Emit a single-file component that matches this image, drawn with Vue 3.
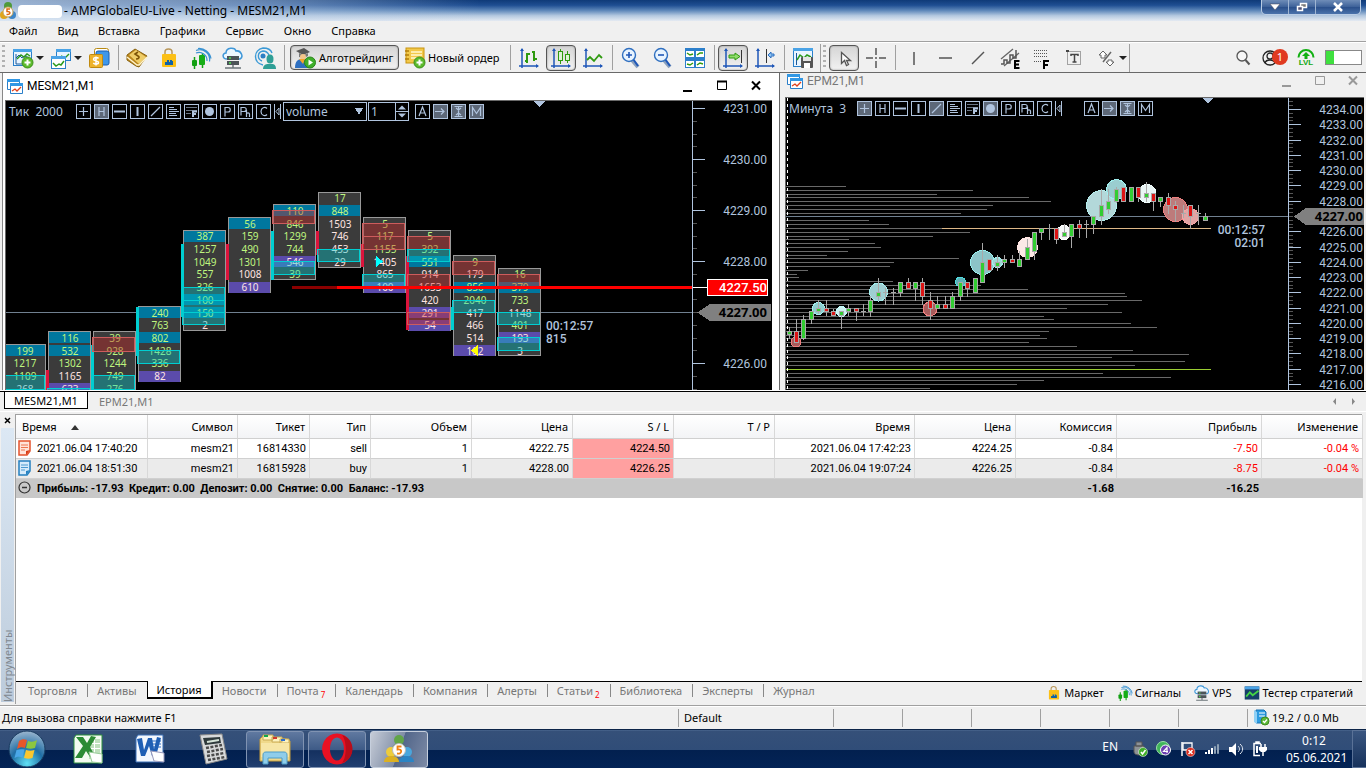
<script setup>
import { ref } from 'vue';

const menuItems = ['Файл', 'Вид', 'Вставка', 'Графики', 'Сервис', 'Окно', 'Справка'];

// 22x22 toolbar drawings
const icons = {
    newChart: '<rect x="1.5" y="2.5" width="18" height="16" fill="#eaf5ff" stroke="#2a7fc9"/><rect x="1" y="2" width="19" height="3" fill="#4aa3e6"/><path d="M4 7v10h14M4 11l3-3 3 3 3-2 4 2" fill="none" stroke="#1c5a9c" stroke-width="1"/><path d="M5 12l4-4 3 2 3-3 3 2" fill="none" stroke="#2a9a1c" stroke-width="1.4"/><circle cx="15.5" cy="15.5" r="5.5" fill="#5cba2c" stroke="#3b8f1b"/><path d="M15.5 12.5v6M12.5 15.5h6" stroke="#fff" stroke-width="2"/>',
    profiles: '<rect x="6.5" y="2.5" width="14" height="11" fill="#eaf5ff" stroke="#2a7fc9"/><rect x="6" y="2" width="15" height="3" fill="#4aa3e6"/><path d="M11 9l4 2 4-4" fill="none" stroke="#2a9a1c" stroke-width="1.4"/><rect x="1.5" y="9.5" width="14" height="12" fill="#fff" stroke="#2a7fc9"/><rect x="1" y="9" width="15" height="3" fill="#4aa3e6"/><path d="M3 16l3 3 3-2 2 1 3-4" fill="none" stroke="#2a9a1c" stroke-width="1.5"/>',
    market: '<rect x="6.5" y="1.5" width="14" height="15" rx="2" fill="#fff" stroke="#b98a12"/><rect x="8" y="4" width="13" height="14" rx="2" fill="#3f97e8" stroke="#1c5fb0"/><rect x="1.5" y="7.5" width="13" height="13" rx="1" fill="#eeb32b" stroke="#c08a10"/><path d="M10.5 11.5c-1-1.500-5-1.200-5 .7 0 2.300 5 1 5 3.400 0 2-4 2-5.200.4M8 9.500v9" stroke="#fff" stroke-width="1.5" fill="none"/>',
    book: '<path d="M1 8l8-6 12 7-8 11-3-1L1 13z" fill="#b9851c" stroke="#8a6310"/><path d="M3 8l7-5 10 7-7 7z" fill="#efcd68"/><path d="M1 10l10 8 2 0 8-8" fill="none" stroke="#fff3c9" stroke-width="1.5"/><path d="M12 5l-3 2 3 2c2 1 1 3-2 3" fill="none" stroke="#7c5306" stroke-width="1.6"/>',
    bag: '<path d="M7 8V5c0-4 7-4 7 0v3" fill="none" stroke="#b9975a" stroke-width="1.5"/><rect x="4" y="7" width="14" height="13" rx="1" fill="#fcc016"/><path d="M7 18v-3h2v-2h2v2h1v-2h2v1h1v4z" fill="#0e62a8"/>',
    signals: '<path d="M4.5 10v12M12.500 6v15" stroke="#12a012" stroke-width="1.5"/><rect x="2" y="13" width="5" height="6" rx="1" fill="#12a012"/><rect x="9" y="8" width="6" height="10" rx="1" fill="#16ad16"/><path d="M6 6a8 8 0 0 1 11 8M6 3.500a10 10 0 0 1 13.500 11M8 1.500a12 12 0 0 1 13 10" fill="none" stroke="#3b93d2" stroke-width="1.2"/>',
    cloud: '<path d="M5 12c-5 0-5-6-1-6 0-6 9-6 10-2 5-1 8 6 4 8z" fill="#eef8ff" stroke="#3f97d8" stroke-width="1.5"/><rect x="5" y="9" width="12" height="4" fill="#4c5458"/><rect x="5" y="14" width="12" height="4" fill="#4c5458"/><path d="M7 11h2M7 16h2" stroke="#4fe04f" stroke-width="1.5"/><path d="M11 18v3M3 21h16" stroke="#6b7478" stroke-width="1.5"/>',
    community: '<path d="M9 18C-1 16-1 3 9 1c5 0 8 2 9 5M8 14C3 12 3 5 9 4c3 0 5 2 6 4" fill="none" stroke="#3b9ad6" stroke-width="1.4"/><circle cx="9" cy="9" r="2.5" fill="#2d7fc4"/><ellipse cx="16" cy="12" rx="3.5" ry="4.5" fill="#2f9f96"/><path d="M9 22c0-4 3-5 5-5h4c2 0 4 1 4 5z" fill="#2f9f96"/>',
    bars: '<path d="M4 2v19M1 19h19" stroke="#1f57b8" stroke-width="1.5"/><path d="M4 1l-2 3h4zM21 19l-3-2v4z" fill="#1f57b8"/><path d="M9 6v10M7 14h2M9 7h3M16 4v10M14 5h2M16 12h3" stroke="#2f9a10" stroke-width="2"/>',
    candles: '<path d="M4 2v19M1 19h19" stroke="#1f57b8" stroke-width="1.5"/><path d="M4 1l-2 3h4zM21 19l-3-2v4z" fill="#1f57b8"/><path d="M10.5 2v15M17.500 4v12" stroke="#2f9a10"/><rect x="8.5" y="4.5" width="4" height="9" fill="#dff2d8" stroke="#2f9a10"/><rect x="15.5" y="7.5" width="4" height="6" fill="#dff2d8" stroke="#2f9a10"/>',
    line: '<path d="M4 2v19M1 19h19" stroke="#1f57b8" stroke-width="1.5"/><path d="M4 1l-2 3h4zM21 19l-3-2v4z" fill="#1f57b8"/><path d="M5 13l3-3 4 4 5-6 3 3" fill="none" stroke="#2f9a10" stroke-width="1.8"/>',
    zoomIn: '<path d="M12 13l6 7" stroke="#8aa0bd" stroke-width="4"/><path d="M13 12l5 7" stroke="#1f57b8" stroke-width="2"/><circle cx="9" cy="8" r="6.5" fill="#e8f4ff" stroke="#2f6fc0" stroke-width="1.4"/><path d="M9 5v6M6 8h6" stroke="#1f57b8" stroke-width="1.6"/>',
    zoomOut: '<path d="M12 13l6 7" stroke="#8aa0bd" stroke-width="4"/><path d="M13 12l5 7" stroke="#1f57b8" stroke-width="2"/><circle cx="9" cy="8" r="6.5" fill="#e8f4ff" stroke="#2f6fc0" stroke-width="1.4"/><path d="M6 8h6" stroke="#1f57b8" stroke-width="1.6"/>',
    tile: '<rect x="1" y="1" width="20" height="20" fill="#2c7fcb"/><path d="M2 4h8v6H2zM12 4h8v6h-8zM2 14h8v6H2zM12 14h8v6h-8z" fill="#fff"/><path d="M3 6l3 2 3-1M13 8l3-2 3 0M3 17l3 1 3-2M13 18l3-2 3 1" fill="none" stroke="#2f9a10" stroke-width="1.5"/>',
    scroll: '<path d="M4 2v19M1 19h19" stroke="#1f57b8" stroke-width="1.5"/><path d="M4 1l-2 3h4zM21 19l-3-2v4z" fill="#1f57b8"/><path d="M19.5 3v13" stroke="#333"/><path d="M7 8h6V6l5 3.500-5 3.500v-2H7z" fill="#8fdc6a" stroke="#2f9a10"/>',
    shift: '<path d="M4 2v19M1 19h19" stroke="#1f57b8" stroke-width="1.5"/><path d="M4 1l-2 3h4zM21 19l-3-2v4z" fill="#1f57b8"/><path d="M12.5 2v14" stroke="#333"/><path d="M20 7h-3V5l-3 3 3 3V9h3z" fill="#8fc4f2" stroke="#2d6fc0"/>',
    save: '<rect x="1.5" y="1.5" width="19" height="18" fill="#eaf5ff" stroke="#2a7fc9"/><rect x="1" y="1" width="20" height="3" fill="#4aa3e6"/><path d="M4.5 6v12" stroke="#1c5a9c"/><path d="M5 13l3-5 4 3 3-3 4 2" fill="none" stroke="#2a9a1c" stroke-width="1.5"/><rect x="9" y="10" width="12" height="11" rx="1" fill="#555"/><rect x="11" y="10" width="8" height="4" fill="#e5e5e5"/><rect x="12" y="16" width="6" height="5" fill="#fff"/>',
    cursor: '<path d="M8.5 5.500v11l3-3 2 5 2-1-2-4h4z" fill="#fff" stroke="#555" stroke-width="1.3"/>',
    cross: '<path d="M11 1v7M11 14v7M1 11h7M14 11h7M10 11h2" stroke="#555" stroke-width="1.5"/>',
    vline: '<path d="M11 5v13" stroke="#555" stroke-width="1.5"/>',
    hline: '<path d="M4 11h13" stroke="#555" stroke-width="1.5"/>',
    trend: '<path d="M5 17L17 5" stroke="#555" stroke-width="1.5"/>',
    channel: '<path d="M2 12L14 2M5 19L20 6" stroke="#666" stroke-width="1.3"/><path d="M2 17h3v-4h3v3h3V8h3v3h3V3" fill="none" stroke="#555" stroke-width="1.5"/><path d="M20.5 14H16v7h4.500M16 17.500h4" fill="none" stroke="#000" stroke-width="2"/>',
    fibo: '<path d="M3 3.500h14M3 6.500h14M3 9.500h14M3 14.500h7" stroke="#555" stroke-dasharray="1 1"/><path d="M18 14h-5v8M13 18h4" fill="none" stroke="#000" stroke-width="2"/>',
    text: '<rect x="4.5" y="4.5" width="13" height="13" fill="none" stroke="#555" stroke-dasharray="1 1"/><path d="M8 9V7.500h7V9M11.500 7.500V15M9.500 15h4" fill="none" stroke="#444" stroke-width="1.5"/><path d="M3 3h3v2H3z" fill="#444"/>',
    shapes: '<path d="M8 4l-4 4h2v3h4V8h2zM15 19l4-4h-2v-2h-4v2h-2z" fill="#fff" stroke="#666"/><path d="M8 15L16 5" stroke="#666" stroke-width="1.5"/>',
    order: '<rect x="2" y="1" width="18" height="15" fill="#f2c84a" stroke="#c8940e"/><path d="M7 5h11M7 8h11M7 11h8" stroke="#fff7d0" stroke-width="1.5"/><path d="M1 4h4M1 8h4M1 12h4" stroke="#b37d0b" stroke-width="1.5"/><circle cx="15.5" cy="15.5" r="5.5" fill="#5cba2c" stroke="#3b8f1b"/><path d="M15.5 12.500v6M12.500 15.500h6" stroke="#fff" stroke-width="2"/>',
    algo: '<path d="M2 4l8-3 6 4-7 3z" fill="#555"/><path d="M5 6v4l5 1 4-2V6l-4 2z" fill="#777"/><circle cx="9" cy="10" r="3" fill="#f3c48a"/><path d="M1 21c0-7 3-9 7-9s7 2 7 9z" fill="#2d6fc0"/><path d="M5 12l4 5 2-5z" fill="#f4a52a"/><circle cx="16" cy="15.5" r="5.5" fill="#3fae2a" stroke="#2b861b"/><path d="M14.5 12.500l4.500 3-4.500 3z" fill="#fff"/>',
    tester: '<rect x="1" y="2" width="20" height="18" fill="#163f68"/><rect x="1" y="2" width="20" height="4" fill="#4aa3e6"/><path d="M3 16l5-6 4 4 8-6" fill="none" stroke="#45d345" stroke-width="2.5"/>'
};

const chartTools = ['newChart', 'profiles', 'market'];
const services = ['book', 'bag', 'signals', 'cloud', 'community'];
const viewGroups = [
    ['bars', 'candles', 'line'],
    ['zoomIn', 'zoomOut', 'tile'],
    ['scroll', 'shift'],
    ['save']
];
const drawTools = ['vline', 'hline', 'trend', 'channel', 'fibo', 'text', 'shapes'];
const pressed = ['candles', 'scroll', 'cursor'];

// little square buttons drawn over each chart
const glyphs = {
    plus: '<path d="M7.5 3v9M3 7.500h9"/>',
    H: '<path d="M5 3v9M10 3v9M5 7.500h5"/>',
    hbar: '<path d="M2 7.500h11" stroke-width="2"/>',
    vbar: '<path d="M7.5 3v9" stroke-width="2"/>',
    slash: '<path d="M3 12l9-9"/>',
    profile: '<path d="M3 3.500h5M3 5.500h8M3 7.500h10M3 9.500h7M3 11.500h8"/>',
    fib: '<path d="M2 3.500h11M2 6.500h11M2 9.500h5" opacity=".6"/><path d="M9 13V7.500h4M9 10h3" stroke-width="2"/>',
    dot: '<circle cx="7.5" cy="7.5" r="4.5" fill="#b0c4de" stroke="none"/>',
    P: '<path d="M5 12.500v-9h3c3 0 3 4.500 0 4.500H5"/>',
    Ph: '<path d="M3 11.500v-8h3c3 0 3 4 0 4H3M8.500 6v7M8.500 10c0-1.500 3-1.500 3 0v3"/>',
    C: '<path d="M11 4.500c-2-2-6-1-6 3s4 5 6 3"/>',
    A: '<path d="M4 12l3.500-9L11 12M5 9h5"/>',
    arrow: '<path d="M2 7.500h9M8 4.500l3 3-3 3"/>',
    beam: '<path d="M3.5 2.500h8M3.500 12.500h8M7.500 3v9M5 4l2.500 2L10 4M5 11l2.500-2L10 11"/>',
    M: '<path d="M3.5 12V3.500l4 6 4-6V12"/>'
};
const mainGlyphs = ['plus', 'H', 'hbar', 'vbar', 'slash', 'profile', 'fib', 'dot', 'P', 'Ph', 'C'];
const modeGlyphs = ['A', 'arrow', 'beam', 'M'];
const leftOn = ['H', 'arrow', 'beam', 'M'];
const rightOn = ['plus', 'slash', 'dot', 'arrow', 'beam'];

const source = ref('volume');
const factor = ref('1');

// footprint: first row index counts up from 4226.00 in quarter points
// cell suffix: b = blue, p = purple, w = light text
const footprint = [
    { x: 3, k: 1, cells: '199b 1217 1109 268w' },
    { x: 48, k: 2, cells: '116b 532b 1302 1165w 633pw' },
    { x: 93, k: 2, cells: '39 928 1244 749 276' },
    { x: 138, k: 4, cells: '240b 763 802b 1428 336 82pw' },
    { x: 183, k: 10, cells: '387b 1257 1049 557 326 100b 150b 2w' },
    { x: 228, k: 11, cells: '56b 159 490 1301 1008w 610pw' },
    { x: 273, k: 12, cells: '110b 846 1299 744 546pw 39' },
    { x: 318, k: 13, cells: '17 848b 1503w 746w 453w 29w' },
    { x: 363, k: 11, cells: '5 117 1155 1405w 865w 100pw' },
    { x: 408, k: 10, cells: '5 392 551b 914w 1653w 420w 291pw 54pw' },
    { x: 453, k: 8, cells: '9 179w 856b 2040 417w 466w 514w 182pw' },
    { x: 498, k: 7, cells: '16 379b 733 1148w 401 193pw 3w' }
].map((col) => {
    const cells = col.cells.split(' ').map((c, i) => ({
        y: 363.3 - (col.k - i) * 12.7,
        text: c.replace(/\D/g, ''),
        fill: c.includes('b') ? '#00779e' : c.includes('p') ? '#5b4bab' : null,
        color: c.includes('w') ? '#ffe4e1' : '#bff57f'
    }));
    return { ...col, cells, top: cells[0].y - 6.5, height: cells.length * 12.6 };
});

const zones = [
    ['buy', 3, 375, 389], ['buy', 48, 388, 400], ['sell', 93, 337, 351], ['buy', 93, 375, 389],
    ['buy', 138, 350, 363], ['buy', 183, 287, 300], ['buy', 183, 300, 312], ['buy', 183, 312, 324],
    ['sell', 273, 210, 223], ['buy', 273, 261, 274], ['buy', 318, 249, 261],
    ['sell', 363, 223, 236], ['sell', 363, 236, 249], ['buy', 363, 274, 287],
    ['sell', 408, 236, 249], ['buy', 408, 249, 261], ['sell', 408, 274, 287],
    ['sell', 408, 312, 324], ['sell', 453, 261, 274], ['buy', 453, 300, 312],
    ['sell', 498, 274, 287], ['buy', 498, 312, 324], ['buy', 498, 337, 350]
];

const bodies = [
    ['#dc143c', 46, 370, 390], ['#00ced1', 91, 345, 390], ['#00ced1', 136, 307, 356], ['#00ced1', 181, 244, 317],
    ['#dc143c', 226, 244, 280], ['#00ced1', 271, 231, 280], ['#dc143c', 316, 231, 255], ['#dc143c', 361, 244, 267],
    ['#dc143c', 406, 256, 330], ['#00ced1', 451, 307, 330]
];

const leftPrices = [4231, 4230, 4229, 4228, 4226];
const leftY = (p) => Math.round(363 - (p - 4226) * 51) + 0.5;
const rightY = (p) => Math.round(109 + (4234 - p) * 15.28) + 0.5;
const rightPrices = Array.from({ length: 19 }, (_, i) => 4234 - i).filter((p) => p !== 4227);

// right ends of the horizontal volume profile, top to bottom
const profile = [
    846, 973, 937, 1029, 1051, 993, 987, 961, 786, 869, 889, 942, 970, 933, 849, 875, 881, 848, 827, 959, 894, 890,
    808, 797, 799, 893, 981, 1028, 1125, 1127, 1142, 1108, 1067, 1122, 1044, 1054, 1131, 1157, 1049, 1040, 1047,
    1029, 1077, 1133, 1189, 1112, 1185, 1135, 1211, 1103, 1171, 1044, 1017, 930
].map((end, i) => ({ end, y: Math.round(186 + i * 3.81) + 0.5, poc: i === 48 }));

// x, high, low, body top, body bottom, g/r/d (doji)
const candles = [
    [789, 327, 338, 331, 334, 'g'], [796, 319, 342, 331, 342, 'r'], [803, 315, 339, 319, 338, 'g'],
    [811, 311, 323, 311, 319, 'g'], [818, 300, 313, 308, 311, 'g'], [826, 300, 315, 308, 311, 'r'],
    [833, 309, 315, 311, 315, 'r'], [841, 311, 328, 311, 315, 'g'], [848, 304, 315, 308, 311, 'g'],
    [856, 308, 320, 308, 311, 'r'], [863, 304, 315, 311, 311, 'd'], [870, 296, 316, 300, 311, 'g'],
    [878, 278, 300, 292, 296, 'g'], [885, 288, 304, 292, 292, 'd'], [893, 288, 304, 292, 292, 'd'],
    [900, 282, 296, 282, 292, 'g'], [908, 278, 288, 282, 288, 'r'], [915, 282, 300, 282, 288, 'g'],
    [922, 278, 304, 282, 296, 'r'], [930, 292, 319, 300, 308, 'r'], [937, 296, 308, 304, 308, 'g'],
    [945, 296, 308, 304, 308, 'r'], [952, 292, 308, 296, 308, 'g'], [960, 282, 300, 282, 296, 'g'],
    [967, 282, 296, 282, 288, 'r'], [975, 278, 292, 278, 292, 'g'], [982, 243, 282, 262, 282, 'g'],
    [989, 259, 270, 259, 270, 'r'], [997, 255, 270, 262, 266, 'g'], [1004, 255, 267, 259, 262, 'g'],
    [1012, 255, 262, 259, 262, 'r'], [1019, 251, 266, 259, 266, 'g'], [1027, 239, 259, 247, 259, 'g'],
    [1034, 232, 259, 232, 251, 'g'], [1041, 228, 239, 228, 232, 'g'], [1049, 224, 239, 228, 228, 'd'],
    [1056, 228, 243, 228, 239, 'r'], [1064, 224, 236, 232, 236, 'g'], [1071, 224, 247, 224, 236, 'g'],
    [1079, 220, 237, 224, 228, 'r'], [1086, 220, 237, 224, 224, 'd'], [1093, 216, 233, 216, 224, 'g'],
    [1101, 189, 224, 205, 216, 'g'], [1108, 189, 213, 201, 209, 'g'], [1116, 187, 202, 189, 201, 'g'],
    [1123, 187, 201, 187, 201, 'r'], [1131, 187, 201, 187, 201, 'g'], [1138, 187, 201, 187, 197, 'r'],
    [1146, 182, 201, 193, 197, 'g'], [1153, 193, 210, 193, 201, 'r'], [1160, 197, 206, 197, 201, 'g'],
    [1168, 193, 213, 197, 205, 'r'], [1175, 201, 221, 205, 209, 'r'], [1183, 205, 217, 213, 213, 'd'],
    [1190, 205, 228, 205, 216, 'r'], [1198, 205, 224, 213, 213, 'd'], [1205, 213, 220, 216, 220, 'g']
];
const candleFill = { g: '#32cd32', r: '#dc1414' };

const bubbles = [
    [796, 342, 5, '#a85c5c', '#f08080'], [818.5, 308.5, 6, '#8fcfd0', '#a5eeee'], [841.5, 311.5, 5, '#cdf1f1', '#c5ffff'],
    [878.5, 292, 9, '#9fcfd2', '#a5eeee'], [930, 309, 7, '#a85c5c', '#f08080'], [960.5, 282, 5, '#5fb0b5', '#50dbe0'],
    [982.5, 262.5, 12, '#8cc4c8', '#98eeee'], [997.5, 262.5, 5, '#9fd8d8', '#a5eeee'], [1027.5, 247.5, 10, '#fbe9e7', '#ffe4e1'],
    [1064, 232.5, 7, '#f5f8f8', '#fff'], [1101.5, 205.5, 15, '#b3d8da', '#b5eeee'], [1116.5, 189.5, 10, '#9acdd0', '#a0f0f0'],
    [1147, 193.5, 9, '#e9f5f5', '#f2ffff'], [1175.5, 209.5, 12, '#bd7b7b', '#f08080'], [1190.5, 216.5, 8, '#e2a4a4', '#f5a5a5']
];

const widths = [132, 90, 72, 61, 101, 101, 101, 101, 140, 101, 101, 145, 101];
const headers = ['Время', 'Символ', 'Тикет', 'Тип', 'Объем', 'Цена', 'S / L', 'T / P', 'Время', 'Цена', 'Комиссия', 'Прибыль', 'Изменение'];
const trades = [
    ['2021.06.04 17:40:20', 'mesm21', '16814330', 'sell', '1', '4222.75', '4224.50', '', '2021.06.04 17:42:23', '4224.25', '-0.84', '-7.50', '-0.04 %'],
    ['2021.06.04 18:51:30', 'mesm21', '16815928', 'buy', '1', '4228.00', '4226.25', '', '2021.06.04 19:07:24', '4226.25', '-0.84', '-8.75', '-0.04 %']
];

const toolboxTabs = [
    { name: 'Торговля' }, { name: 'Активы' }, { name: 'История' }, { name: 'Новости' }, { name: 'Почта', count: 7 },
    { name: 'Календарь' }, { name: 'Компания' }, { name: 'Алерты' }, { name: 'Статьи', count: 2 },
    { name: 'Библиотека' }, { name: 'Эксперты' }, { name: 'Журнал' }
];
const activeTab = ref('История');
const links = [
    { icon: 'bag', name: 'Маркет' },
    { icon: 'signals', name: 'Сигналы' },
    { icon: 'cloud', name: 'VPS' },
    { icon: 'tester', name: 'Тестер стратегий' }
];
</script>

<template>
    <div class="terminal">
        <header class="titlebar">
            <svg class="app-icon" width="16" height="20" viewBox="0 0 16 20">
                <circle cx="8" cy="5" r="4" fill="#4f9a3a" />
                <circle cx="4" cy="14" r="4" fill="#e0a51c" />
                <circle cx="12" cy="14" r="4" fill="#3d86c8" />
                <circle cx="8" cy="11" r="5" fill="#fff" stroke="#c9a352" />
                <path d="M10 8H7v2.500c4-.5 4 3.500-.5 3" fill="none" stroke="#e06a10" stroke-width="1.5" />
            </svg>
            <span class="account"></span>
            <h1 class="window-title">- AMPGlobalEU-Live - Netting - MESM21,M1</h1>
            <div class="window-buttons">
                <button aria-label="Свернуть"><svg width="12" height="10"><path d="M1 2h10L6 8z" fill="#fff" stroke="#445" stroke-width=".5" /></svg></button>
                <button aria-label="Развернуть"><svg width="12" height="10"><path d="M4.5 1.500h6v4h-6z" fill="#777" stroke="#fff" stroke-width="1.5" /><path d="M1.5 4.500h5v4h-5z" fill="#557" stroke="#fff" stroke-width="1.5" /></svg></button>
                <button class="wide" aria-label="Закрыть"><svg width="12" height="10"><path d="M2 1l8 8M10 1L2 9" stroke="#fff" stroke-width="2.5" /></svg></button>
            </div>
        </header>

        <nav class="menu">
            <a v-for="item in menuItems" :key="item" href="#">{{ item }}</a>
        </nav>

        <div class="toolbar">
            <span class="grip"></span>
            <template v-for="name in chartTools" :key="name">
                <button class="tool" :aria-label="name"><svg width="22" height="22" v-html="icons[name]"></svg></button>
                <span v-if="name !== 'market'" class="caret"></span>
            </template>
            <span class="sep"></span>
            <button v-for="name in services" :key="name" class="tool" :aria-label="name"><svg width="22" height="22" v-html="icons[name]"></svg></button>
            <span class="sep"></span>
            <button class="text-tool algo pressed"><svg width="22" height="22" v-html="icons.algo"></svg>Алготрейдинг</button>
            <button class="text-tool order"><svg width="22" height="22" v-html="icons.order"></svg>Новый ордер</button>
            <template v-for="(group, i) in viewGroups" :key="i">
                <span class="sep"></span>
                <button v-for="name in group" :key="name" class="tool" :class="{ pressed: pressed.includes(name) }" :aria-label="name">
                    <svg width="22" height="22" v-html="icons[name]"></svg>
                </button>
            </template>
            <span class="divider"></span>
            <span class="grip"></span>
            <button class="tool pressed" aria-label="cursor"><svg width="22" height="22" v-html="icons.cursor"></svg></button>
            <button class="tool" aria-label="cross"><svg width="22" height="22" v-html="icons.cross"></svg></button>
            <span class="sep"></span>
            <button v-for="name in drawTools" :key="name" class="tool" :aria-label="name"><svg width="22" height="22" v-html="icons[name]"></svg></button>
            <span class="caret"></span>
            <span class="divider"></span>
            <div class="tool-right">
                <button aria-label="Поиск"><svg width="16" height="18"><circle cx="7" cy="7" r="5" fill="#f6f6f6" stroke="#555" stroke-width="1.3" /><path d="M10.5 11l4 4.500" stroke="#555" stroke-width="2" /></svg></button>
                <button class="profile-btn" aria-label="Сообщения">
                    <svg width="18" height="18"><circle cx="9" cy="9" r="7" fill="none" stroke="#222" stroke-width="1.3" /><circle cx="9" cy="7" r="3" fill="none" stroke="#222" stroke-width="1.3" /><path d="M4 14c1-4 9-4 10 0" fill="none" stroke="#222" stroke-width="1.3" /></svg>
                    <span class="badge">1</span>
                </button>
                <span class="level">
                    <svg width="18" height="11"><path d="M1.5 9.500a7.500 7.500 0 0 1 15 0" fill="none" stroke="#12b012" stroke-width="2" /><path d="M9 4l4 4h-2.500v3h-3V8H5z" fill="#12b012" /></svg>
                    LVL
                </span>
                <span class="battery"></span>
            </div>
        </div>

        <main class="charts">
            <section class="chart active">
                <div class="chart-title">
                    <svg width="16" height="16"><path d="M.5 1.500h12v10H.5z" fill="#fff" stroke="#2a7fc9" /><path d="M0 1h13v3H0z" fill="#3197e4" /><path d="M3.5 5.500h12v10h-12z" fill="#fff" stroke="#2a7fc9" /><path d="M3 5h13v3H3z" fill="#3197e4" /><path d="M5 13l3-2 2 2 4-4" fill="none" stroke="#e0401c" stroke-width="1.3" /></svg>
                    <span>MESM21,M1</span>
                    <svg class="frame-buttons" width="82" height="16"><path d="M3 13h9" stroke="#000" stroke-width="2" /><path d="M37.5 3.500h9v8h-9z" fill="none" stroke="#000" /><path d="M37 3.500h10" stroke="#000" stroke-width="2" /><path d="M72 3.500l8 8M80 3.500l-8 8" stroke="#000" stroke-width="2" /></svg>
                </div>
                <div class="canvas">
                    <svg class="plot" width="100%" height="289">
                        <g transform="translate(-6 -101)" shape-rendering="crispEdges">
                            <path d="M0 312.500h2000" stroke="#708090" />
                            <g v-for="col in footprint" :key="col.x">
                                <rect :x="col.x + 0.5" :y="Math.round(col.top) + 0.5" width="42" :height="Math.round(col.height) - 1" fill="#3b3b3b" stroke="#999" />
                                <rect v-for="c in col.cells.filter((c) => c.fill)" :key="c.y" :x="col.x + 1" :y="c.y - 5.5" width="41" height="11" :fill="c.fill" />
                                <text v-for="c in col.cells" :key="c.text" :x="col.x + 22" :y="Math.round(c.y) + 4" :fill="c.color" class="cell">{{ c.text }}</text>
                            </g>
                            <rect v-for="(b, i) in bodies" :key="'b' + i" :x="b[1]" :y="b[2]" width="3" :height="b[3] - b[2]" :fill="b[0]" />
                            <rect v-for="(z, i) in zones" :key="'z' + i" :x="z[1] - 0.5" :y="z[2] + 0.5" width="42" :height="z[3] - z[2]" :class="z[0]" />
                            <path d="M292 287.500h46" stroke="#8b0000" stroke-width="3" />
                            <path d="M337 287.500h2000" stroke="#f00" stroke-width="3" />
                            <path d="M376 256v11l7-5.500z" fill="#0ff" />
                            <path d="M478 345v11l-7-5.500z" fill="#ff0" />
                            <path d="M533 101h12l-6 6z" fill="#b0c4de" />
                            <text x="546" y="330" class="timer">00:12:57</text>
                            <text x="546" y="343" class="timer">815</text>
                        </g>
                    </svg>
                    <svg class="axis" width="80" height="289">
                        <g transform="translate(-692 -101)" shape-rendering="crispEdges">
                            <path d="M692.500 101v300" stroke="#b0c4de" />
                            <path v-for="n in 23" :key="n" :d="`M693 ${Math.round(108 + (n - 1) * 12.75) + 0.5}h4`" stroke="#555" />
                            <g v-for="p in leftPrices" :key="p">
                                <path :d="`M693 ${leftY(p)}h12`" stroke="#b0c4de" />
                                <text x="767" :y="leftY(p) + 4.5" class="price">{{ p }}.00</text>
                            </g>
                            <path d="M693 287.500h14" stroke="#fff" />
                            <rect x="707.5" y="279.5" width="60" height="16" fill="#f00" stroke="#fff" />
                            <text x="767" y="292" class="price alert">4227.50</text>
                            <path d="M697 312.500l13-8.500h61v17h-61z" fill="#808080" />
                            <text x="767" y="317" class="price bid">4227.00</text>
                        </g>
                    </svg>
                    <div class="overlay">
                        <span class="mode">Тик&nbsp; 2000</span>
                        <button v-for="g in mainGlyphs" :key="g" class="glyph" :class="{ on: leftOn.includes(g) }" :aria-label="g"><svg width="15" height="15" v-html="glyphs[g]"></svg></button>
                        <svg width="7" height="15"><path d="M.5 0v15M6.500 0v15" stroke="#b0c4de" /><path d="M5 4v7L2 7.500z" fill="none" stroke="#b0c4de" /></svg>
                        <select v-model="source" class="source" aria-label="Источник"><option>volume</option></select>
                        <span class="spinner">
                            <input v-model="factor" aria-label="Множитель" />
                            <svg width="13" height="17"><path d="M.5 0v17M0 8.500h13" stroke="#b0c4de" /><path d="M3 6.500l4-4 4 4zM3 10.500l4 4 4-4z" fill="#b0c4de" /></svg>
                        </span>
                        <button v-for="g in modeGlyphs" :key="g" class="glyph" :class="{ on: leftOn.includes(g) }" :aria-label="g"><svg width="15" height="15" v-html="glyphs[g]"></svg></button>
                    </div>
                </div>
            </section>

            <section class="chart second">
                <div class="chart-title">
                    <svg width="16" height="16"><path d="M.5 1.500h12v10H.5z" fill="#fff" stroke="#2a7fc9" /><path d="M0 1h13v3H0z" fill="#3197e4" /><path d="M3.5 5.500h12v10h-12z" fill="#fff" stroke="#2a7fc9" /><path d="M3 5h13v3H3z" fill="#3197e4" /><path d="M5 13l3-2 2 2 4-4" fill="none" stroke="#e0401c" stroke-width="1.3" /></svg>
                    <span>EPM21,M1</span>
                    <svg class="frame-buttons" width="82" height="16"><path d="M3 13h9" stroke="#999" stroke-width="2" /><path d="M36.5 3.500h9v8h-9z" fill="none" stroke="#999" /><path d="M70 3.500l8 8M78 3.500l-8 8" stroke="#999" stroke-width="2" /></svg>
                </div>
                <div class="canvas">
                    <svg class="plot" width="100%" height="292">
                        <g transform="translate(-786 -98)" shape-rendering="crispEdges">
                            <path v-for="(l, i) in profile" :key="i" :d="`M786 ${l.y}H${l.end}`" :stroke="l.poc ? '#9acd32' : '#696969'" />
                            <path d="M786 216.500h2000" stroke="#708090" />
                            <path d="M942 228.500h269" stroke="#deb887" />
                            <path d="M787.500 98v300" stroke="#fff" stroke-dasharray="3 3" />
                            <circle v-for="(b, i) in bubbles" :key="'o' + i" :cx="b[0]" :cy="b[1]" :r="b[2]" :fill="b[3]" :stroke="b[4]" />
                            <g v-for="c in candles" :key="c[0]">
                                <path :d="`M${c[0] + 0.5} ${c[1]}V${c[2] + 1}`" stroke="#a9a9a9" />
                                <path v-if="c[5] === 'd'" :d="`M${c[0] - 2} ${c[3] + 0.5}h5`" stroke="#a9a9a9" />
                                <rect v-else :x="c[0] - 1.5" :y="c[3] + 0.5" width="4" :height="c[4] - c[3]" :fill="candleFill[c[5]]" stroke="#a9a9a9" />
                            </g>
                            <path d="M1202 98h12l-6 5z" fill="#b0c4de" />
                            <text x="1265" y="234" class="timer end">00:12:57</text>
                            <text x="1265" y="247" class="timer end">02:01</text>
                        </g>
                    </svg>
                    <svg class="axis" width="76" height="292">
                        <g transform="translate(-1288 -98)" shape-rendering="crispEdges">
                            <path d="M1288.500 98v300" stroke="#b0c4de" />
                            <path v-for="n in 75" :key="n" :d="`M1289 ${Math.round(101.3 + (n - 1) * 3.82) + 0.5}h4`" stroke="#555" />
                            <g v-for="p in rightPrices" :key="p">
                                <path :d="`M1289 ${rightY(p)}h12`" stroke="#b0c4de" />
                                <text x="1363" :y="rightY(p) + 4.5" class="price">{{ p }}.00</text>
                            </g>
                            <path d="M1294 216.500l12-8.500h58v17h-58z" fill="#808080" />
                            <text x="1363" y="221" class="price bid">4227.00</text>
                        </g>
                    </svg>
                    <div class="overlay">
                        <span class="mode">Минута&nbsp; 3</span>
                        <button v-for="g in mainGlyphs" :key="g" class="glyph" :class="{ on: rightOn.includes(g) }" :aria-label="g"><svg width="15" height="15" v-html="glyphs[g]"></svg></button>
                        <svg class="gap" width="7" height="15"><path d="M.5 0v15M6.500 0v15" stroke="#b0c4de" /><path d="M5 4v7L2 7.500z" fill="none" stroke="#b0c4de" /></svg>
                        <button v-for="g in modeGlyphs" :key="g" class="glyph" :class="{ on: rightOn.includes(g) }" :aria-label="g"><svg width="15" height="15" v-html="glyphs[g]"></svg></button>
                    </div>
                </div>
            </section>
        </main>

        <nav class="chart-tabs">
            <a href="#" class="current">MESM21,M1</a>
            <a href="#">EPM21,M1</a>
            <svg class="tab-arrows" width="24" height="9"><path d="M4 1v7L1 4.500zM20 1v7l3-3.500z" fill="#888" /></svg>
        </nav>

        <section class="toolbox">
            <aside class="side">
                <button aria-label="Закрыть панель"><svg width="7" height="7"><path d="M1 1l5 5M6 1L1 6" stroke="#000" stroke-width="1.5" /></svg></button>
                <span class="side-label">Инструменты</span>
            </aside>
            <div class="toolbox-main">
                <div class="history">
                    <table>
                        <colgroup><col v-for="(w, i) in widths" :key="i" :style="{ width: w + 'px' }" /></colgroup>
                        <thead>
                            <tr><th v-for="(h, i) in headers" :key="i">{{ h }}<span v-if="i === 0" class="sort"></span></th></tr>
                        </thead>
                        <tbody>
                            <tr v-for="(row, r) in trades" :key="r">
                                <td v-for="(cell, i) in row" :key="i" :class="{ stop: i === 6, loss: i > 10 }">
                                    <svg v-if="i === 0" class="doc" width="13" height="16">
                                        <path d="M1 3V1h11v10l-3 4H1z" :fill="r ? '#d5ebfb' : '#ffe3d9'" :stroke="r ? '#2480c0' : '#e5532d'" stroke-width="1.5" />
                                        <path d="M3 5h7M3 7.500h7M3 10h4" :stroke="r ? '#4a9ad0' : '#ee7550'" />
                                        <path d="M12 10l-4 5v-4z" :fill="r ? '#2480c0' : '#d63c15'" />
                                    </svg>{{ cell }}
                                </td>
                            </tr>
                            <tr class="total">
                                <td colspan="10">
                                    <svg class="doc" width="13" height="13"><circle cx="6.5" cy="6.5" r="5.5" fill="none" stroke="#333" stroke-width="1.2" /><path d="M4 6.500h5" stroke="#333" stroke-width="1.5" /></svg>Прибыль: -17.93&nbsp; Кредит: 0.00&nbsp; Депозит: 0.00&nbsp; Снятие: 0.00&nbsp; Баланс: -17.93
                                </td>
                                <td>-1.68</td>
                                <td>-16.25</td>
                                <td></td>
                            </tr>
                        </tbody>
                    </table>
                </div>
                <div class="toolbox-foot">
                    <button v-for="t in toolboxTabs" :key="t.name" class="tab" :class="{ current: t.name === activeTab }" @click="activeTab = t.name">
                        {{ t.name }}<sub v-if="t.count">{{ t.count }}</sub>
                    </button>
                    <div class="links">
                        <a v-for="l in links" :key="l.name" href="#"><svg width="16" height="16" viewBox="0 0 22 22" v-html="icons[l.icon]"></svg>{{ l.name }}</a>
                    </div>
                </div>
            </div>
        </section>

        <footer class="status">
            <span class="help">Для вызова справки нажмите F1</span>
            <span class="profile-name">Default</span>
            <span v-for="n in 6" :key="n" class="slot"></span>
            <span class="traffic">
                <svg width="17" height="17"><path d="M3 1h8l2 2v11H3z" fill="#2d9be0" stroke="#1873b5" /><path d="M6 4h6M6 7h6" stroke="#fff" /><path d="M1 1l3 2v12l-3-2z" fill="#8fd0f5" /><circle cx="12" cy="12" r="4" fill="#5fb93a" stroke="#3c8a1d" /><path d="M10 12l1.500 1.500L14 10.500" fill="none" stroke="#fff" stroke-width="1.3" /></svg>
                19.2 / 0.0 Mb
            </span>
        </footer>

        <div class="taskbar">
            <button class="task" aria-label="Пуск">
                <svg width="38" height="38" viewBox="0 0 38 38">
                    <defs><radialGradient id="orb" cx=".5" cy=".9" r=".9"><stop offset="0" stop-color="#5fe0f5" /><stop offset=".5" stop-color="#1f6ea5" /><stop offset="1" stop-color="#9cb6cf" /></radialGradient></defs>
                    <circle cx="19" cy="19" r="18" fill="url(#orb)" stroke="#183a5f" />
                    <path d="M11 11c3-2 5-2 8-1l-2 8c-3-1-5-1-8 1z" fill="#e8562a" />
                    <path d="M20 11c3 1 6 1 9-1l-2 8c-3 1-6 1-9 0z" fill="#8cc63f" />
                    <path d="M8.500 20c3-1 5-1 8-.5l-2 8c-3-1-5-1-8 .5z" fill="#4aa8e8" />
                    <path d="M18 20c3 1 5 1 8.500 0l-2 8c-3 1-5 1-8.500 0z" fill="#fbc72e" />
                </svg>
            </button>
            <button class="task" aria-label="Excel">
                <svg width="32" height="32"><path d="M4 2h26v28H2V5z" fill="#f3faf1" stroke="#2d8f3c" /><path d="M17 6h11v20H17z" fill="#bfe0bd" /><path d="M17 10.500h11M17 15.500h11M22.500 6v20" stroke="#fff" /><path d="M4 4h7l4 6 4-7 5 1-6 10 6 11-6-1-4-6-4 7H3l8-12z" fill="#2c8b35" /><path d="M17 19l13 2v9l-10-1z" fill="#fff" stroke="#9c9" /></svg>
            </button>
            <button class="task" aria-label="Word">
                <svg width="32" height="32"><path d="M4 2h25v27H2V5z" fill="#f3f7fd" stroke="#3a6fb5" /><path d="M18 8h9M18 11h9M18 14h9" stroke="#8fb2e0" stroke-width="2" /><path d="M3 6l5-1 2 12 4-12h4l2 11 3-12 4 1-5 18h-4l-3-10-4 10H7z" fill="#1f5fb4" /><path d="M17 18l13 2v9l-10-1z" fill="#fff" stroke="#99b" /></svg>
            </button>
            <button class="task" aria-label="Калькулятор">
                <svg width="32" height="32"><path d="M4 2l22-1 5 25-21 5z" fill="#d8dadb" stroke="#888" /><path d="M7 5l17-1 1 6-16 2z" fill="#2f3a3c" /><path d="M11 9l12-2" stroke="#d5e3d8" stroke-width="2" /><path d="M10 15l16-3M11 19l16-3M11 23l17-3M12 27l17-3" stroke="#4b4b4b" stroke-width="2.5" stroke-dasharray="3 1.5" /></svg>
            </button>
            <button class="task open" aria-label="Проводник">
                <svg width="36" height="34"><path d="M3 7l3-3h10l2 3h12l3 2v20H3z" fill="#f0d98a" stroke="#c49d3c" /><path d="M6 3h10v5H6zM15 5h10v5H15zM23 7h9v4h-9z" fill="#fdf2bd" stroke="#c9ab55" /><path d="M7 4h4" stroke="#12a84a" stroke-width="2" /><path d="M16 6h4" stroke="#d03a2d" stroke-width="2" /><path d="M24 8h4" stroke="#2d6fd0" stroke-width="2" /><path d="M4 11h28v14H4z" fill="#f7e6a6" /><path d="M6 32V23c0-2 1-3 3-3h18c2 0 3 1 3 3v9h-5v-6H11v6z" fill="#8fcdea" stroke="#4d9cc8" /></svg>
            </button>
            <button class="task open" aria-label="Opera">
                <svg width="34" height="34"><path fill-rule="evenodd" d="M17 1.500a15 15.500 0 1 0 .1 0zM17 5.500a7 11.500 0 1 1-.1 0z" fill="#e81123" /><path d="M22 3c14 4 14 24 0 28 5-6 5-22 0-28z" fill="#b80d1a" /></svg>
            </button>
            <button class="task open current" aria-label="MetaTrader 5">
                <svg width="32" height="32"><circle cx="16" cy="7" r="5" fill="#61a548" /><path d="M9 17c0-9 14-9 14 0z" fill="#3f8b2d" /><circle cx="8" cy="19" r="5" fill="#edcc3c" /><path d="M1 29c0-8 15-8 15 0z" fill="#dcb021" /><circle cx="24" cy="19" r="5" fill="#4aa6dc" /><path d="M16 29c0-8 15-8 15 0z" fill="#2b84c4" /><circle cx="16" cy="17" r="6.5" fill="#fff" stroke="#bbb" /><path d="M18.500 13.500h-4v3c5-1 5 5-.5 4" fill="none" stroke="#f08010" stroke-width="1.8" /></svg>
            </button>
            <div class="tray">
                <span>EN</span>
                <svg width="16" height="18"><path d="M4 2h6v4H4zM2 6h10v6c0 4-10 4-10 0z" fill="#8d9297" stroke="#555" /><circle cx="11" cy="12" r="4.5" fill="#3fae2a" stroke="#fff" stroke-width=".5" /><path d="M9 12l1.500 2 3-4" fill="none" stroke="#fff" stroke-width="1.5" /></svg>
                <svg width="16" height="18"><circle cx="7" cy="8" r="6.5" fill="#3fb55a" stroke="#9fe0a8" /><circle cx="9.5" cy="10" r="5" fill="#6b3fb0" stroke="#fff" /><path d="M11 13V7.500L7.500 11.500H12" fill="none" stroke="#fff" stroke-width="1.2" /></svg>
                <svg width="16" height="18"><path d="M2 2v14" stroke="#fff" stroke-width="1.5" /><path d="M3 3h9v7H3z" fill="none" stroke="#fff" stroke-width="1.3" /><circle cx="10.5" cy="12" r="4.5" fill="#dc2b1c" stroke="#fff" stroke-width=".5" /><path d="M8.500 10l4 4M12.500 10l-4 4" stroke="#fff" stroke-width="1.5" /></svg>
                <svg width="16" height="18"><path d="M1 14v-2h2v2zM4 14v-4h2v4zM7 14V8h2v6z" fill="#fff" /><path d="M10.500 13.500v-7h1v7zM13.500 13.500v-9h1v9z" fill="#577" stroke="#8ca0b5" /></svg>
                <svg width="16" height="18"><path d="M1 7h3l4-4v13l-4-4H1z" fill="#fff" /><path d="M10 6c2 2 2 4 0 6M12 4c3.500 3 3.500 7 0 10" fill="none" stroke="#dfe6ef" /></svg>
                <svg width="16" height="18"><path d="M8 15.500H2v-12h7M4 3V2h3v1" fill="none" stroke="#fff" stroke-width="1.5" /><path d="M4 6h2v7H4z" fill="#fff" /><path d="M9 4v3M13 4v3" stroke="#fff" stroke-width="1.5" /><path d="M7 7h8v3l-2 2h-4l-2-2z" fill="#fff" /><path d="M11 12v4" stroke="#fff" stroke-width="1.5" /></svg>
                <time>0:12<br />05.06.2021</time>
            </div>
            <span class="show-desktop"></span>
        </div>
    </div>
</template>

<style>
html,
body {
    margin: 0;
    background: #f0f0f0;
}
</style>

<style scoped>
.terminal {
    display: flex;
    flex-direction: column;
    min-height: 100vh;
    box-sizing: border-box;
    background: #f0f0f0;
    color: #000;
    font: 11px/14px "Noto Sans", "Open Sans", sans-serif;
}

button {
    padding: 0;
    border: 0;
    background: none;
    color: inherit;
    font: inherit;
}

a {
    color: inherit;
    text-decoration: none;
}

svg {
    display: block;
    flex-shrink: 0;
}

/* title */
.titlebar {
    display: flex;
    align-items: center;
    height: 21px;
    background:
        linear-gradient(90deg, rgba(214, 228, 243, 0.7) 0, rgba(190, 210, 233, 0.5) 250px, transparent 480px),
        linear-gradient(#0f3a78 0, #1f4e92 25%, #5f88ba 50%, #b5c9e0 75%, #e4eaf2 100%);
}

.account {
    width: 44px;
    height: 13px;
    margin: 2px 2px 0;
    border-radius: 4px;
    background: #fff;
}

.window-title {
    margin: 0;
    font-size: 12px;
    font-weight: 400;
}

.window-buttons {
    display: flex;
    align-self: flex-start;
    margin: 0 5px 0 auto;
    border: 1px solid #b9cce4;
    border-top: 0;
    border-radius: 0 0 5px 5px;
    background: linear-gradient(#6f8db8, #3c6098 50%, #2a4f8a 51%, #4a72ab);
}

.window-buttons button {
    display: flex;
    align-items: center;
    justify-content: center;
    width: 27px;
    height: 14px;
    border-right: 1px solid #9fb5d3;
}

.window-buttons .wide {
    width: 44px;
    border-right: 0;
}

/* menu */
.menu {
    display: flex;
    gap: 20px;
    height: 20px;
    padding-left: 9px;
    border-bottom: 1px solid #a0a0a0;
    line-height: 20px;
}

/* toolbar */
.toolbar {
    display: flex;
    align-items: center;
    height: 31px;
    border-bottom: 1px solid #696969;
    border-top: 1px solid #fff;
    box-sizing: border-box;
}

.grip {
    width: 3px;
    height: 25px;
    margin: 0 2px;
    background: repeating-linear-gradient(#b0b0b0 0 2px, transparent 2px 5px);
}

.tool {
    display: flex;
    align-items: center;
    justify-content: center;
    width: 32px;
    height: 26px;
    flex-shrink: 0;
}

.pressed {
    border: 1px solid #555;
    border-radius: 4px;
    background: linear-gradient(#d5d5d5, #f2f2f2);
    box-shadow: inset 0 0 2px #888;
    box-sizing: border-box;
}

.tool.pressed {
    width: 30px;
    margin: 0 1px;
}

.caret {
    border: 4px solid transparent;
    border-top-color: #222;
    border-bottom: 0;
    margin: 0 1px 0 -3px;
}

.sep {
    width: 1px;
    height: 25px;
    margin: 0 2px 0 3px;
    background: #a0a0a0;
}

.divider {
    width: 1px;
    height: 28px;
    margin-left: 1px;
    background: #a0a0a0;
}

.text-tool {
    display: flex;
    align-items: center;
    gap: 3px;
    height: 25px;
    flex-shrink: 0;
    white-space: nowrap;
}

.algo {
    width: 109px;
    margin-left: 3px;
    padding-left: 3px;
}

.order {
    width: 108px;
    padding-left: 5px;
    gap: 2px;
}

.tool-right {
    display: flex;
    align-items: center;
    gap: 10px;
    margin-left: auto;
    padding-right: 4px;
}

.profile-btn {
    position: relative;
    width: 26px;
}

.badge {
    position: absolute;
    top: 0;
    right: -1px;
    width: 16px;
    height: 16px;
    border-radius: 8px;
    background: #e03a20;
    color: #fff;
    line-height: 16px;
    text-align: center;
}

.level {
    color: #12a812;
    font: bold 8px/8px "Liberation Sans", sans-serif;
    text-align: center;
}

.battery {
    width: 35px;
    height: 13px;
    border: 1px solid #888;
    background: linear-gradient(90deg, #3fe03f 8px, #fff 8px);
}

/* charts */
.charts {
    display: flex;
    border-bottom: 1px solid #fff;
}

.chart {
    min-width: 0;
    box-sizing: border-box;
}

.active {
    flex: 767 1 0;
    padding: 0 7px 0 5px;
    border-right: 1px solid #696969;
    background: #fff;
    box-shadow: inset 2px 0 #f0f0f0, inset 3px 0 #888;
}

.second {
    flex: 579 1 0;
    padding: 0 2px 0 5px;
    color: #777;
}

.chart-title {
    display: flex;
    align-items: center;
    gap: 4px;
    height: 25px;
    padding: 0 10px 2px 2px;
    font: 12px/16px "Roboto", sans-serif;
}

.second .chart-title {
    height: 24px;
    padding: 0 3px 0 2px;
    align-items: flex-start;
}

.frame-buttons {
    margin-left: auto;
}

.canvas {
    position: relative;
    display: flex;
    border-top: 1px solid #696969;
    border-left: 1px solid #696969;
    background: #000;
}

.plot {
    flex: 1 1 0;
    min-width: 0;
    overflow: hidden;
}

.cell {
    font: 10px "Noto Sans", sans-serif;
    text-anchor: middle;
}

.timer {
    fill: #b0c4de;
    font: 500 12px "Roboto", sans-serif;
}

.end {
    text-anchor: end;
}

.price {
    fill: #b0c4de;
    font: 12px "Roboto", sans-serif;
    text-anchor: end;
}

.alert {
    fill: #fff;
    font-size: 13px;
    font-weight: 500;
}

.bid {
    fill: #000;
    font: bold 13px "Noto Sans", sans-serif;
}

.buy {
    fill: rgba(0, 206, 209, 0.38);
    stroke: #00ced1;
}

.sell {
    fill: rgba(205, 40, 40, 0.4);
    stroke: #cd5c5c;
}

.overlay {
    position: absolute;
    top: 1px;
    left: 3px;
    display: flex;
    align-items: center;
    gap: 3px;
    height: 19px;
    color: #b0c4de;
    font-size: 12px;
}

.mode {
    width: 64px;
    white-space: nowrap;
}

.second .mode {
    width: 65px;
}

.glyph {
    width: 15px;
    height: 15px;
    outline: 1px solid #b0c4de;
    outline-offset: -1px;
}

.glyph svg {
    fill: none;
    stroke: #b0c4de;
    stroke-width: 1.2;
}

.on {
    background: #5d6878;
}

.gap {
    margin-right: 19px;
}

.source {
    appearance: none;
    width: 84px;
    height: 19px;
    margin-left: -1px;
    padding: 0 2px;
    border: 1px solid #b0c4de;
    border-radius: 0;
    background: conic-gradient(from -30deg at 50% 100%, #b0c4de 60deg, transparent 0) right 3px center / 8px 7px no-repeat #000;
    color: inherit;
    font: inherit;
}

.spinner {
    display: flex;
    width: 39px;
    height: 17px;
    margin: 0 3px 0 -2px;
    border: 1px solid #b0c4de;
}

.spinner input {
    width: 26px;
    padding: 0 2px;
    border: 0;
    background: #000;
    color: inherit;
    font: inherit;
    box-sizing: border-box;
}

/* chart tabs */
.chart-tabs {
    display: flex;
    height: 19px;
    padding-left: 4px;
    border-top: 1px solid #000;
    border-bottom: 1px solid #fff;
    color: #777;
    line-height: 19px;
}

.chart-tabs a {
    padding: 0 11px;
}

.chart-tabs .current {
    height: 16px;
    padding: 0 9px;
    border: 1px solid #000;
    border-top: 0;
    background: #fff;
    color: #000;
    line-height: 17px;
}

.tab-arrows {
    align-self: center;
    margin: 0 10px 0 auto;
}

/* toolbox */
.toolbox {
    display: flex;
    flex: 1;
    padding: 2px 4px 1px 0;
    border-bottom: 1px solid #a0a0a0;
}

.side {
    display: flex;
    flex-direction: column;
    width: 15px;
}

.side button {
    align-self: center;
    padding: 3px 0 4px;
}

.side-label {
    flex: 1;
    width: 13px;
    margin: 0 0 2px 1px;
    background: linear-gradient(#bccbdb, #dce8f4);
    color: #808890;
    line-height: 13px;
    writing-mode: vertical-rl;
    transform: rotate(180deg);
}

.toolbox-main {
    display: flex;
    flex: 1;
    flex-direction: column;
    min-width: 0;
    border-left: 1px solid #a0a0a0;
}

.history {
    flex: 1;
    border-top: 1px solid #a0a0a0;
    border-bottom: 1px solid #000;
    background: #fff;
}

table {
    width: 100%;
    border-collapse: separate;
    border-spacing: 0;
    table-layout: fixed;
}

th,
td {
    height: 19px;
    padding: 0 3px 0 0;
    border-right: 1px solid #d8d8d8;
    border-bottom: 1px solid #d0d0d0;
    line-height: 19px;
    text-align: right;
    white-space: nowrap;
}

th {
    height: 23px;
    padding-right: 4px;
    background: linear-gradient(#fff, #f3f4f6);
    font-weight: 400;
}

td {
    font-family: "Roboto", sans-serif;
}

th:first-child {
    padding-left: 6px;
    text-align: left;
}

td:first-child {
    text-align: left;
}

tbody tr:nth-child(2) td {
    background: #ebebeb;
}

tbody td.stop,
tbody tr:nth-child(2) td.stop {
    background: #ffa0a0;
}

.loss {
    color: #f00;
}

.total td {
    border: 0;
    background: #c8c8c8;
    font-weight: 700;
}

.sort {
    display: inline-block;
    margin-left: 14px;
    border: 4px solid transparent;
    border-top: 0;
    border-bottom: 5px solid #333;
    vertical-align: 1px;
}

.doc {
    display: inline-block;
    margin: -3px 6px 0 2px;
    vertical-align: middle;
}

.toolbox-foot {
    display: flex;
    height: 22px;
}

.tab {
    height: 13px;
    margin-top: 2px;
    padding: 0 10px 0 9px;
    border-right: 1px solid #888;
    color: #777;
    line-height: 13px;
}

.tab:first-child {
    padding-left: 12px;
}

.tab:last-of-type,
.tab:has(+ .current) {
    border-right-color: transparent;
}

.tab.current {
    height: 18px;
    margin: -1px 0 0 -1px;
    padding: 0 9px 0 9px;
    border: 1px solid #000;
    border-top: 0;
    border-right-width: 2px;
    border-bottom-width: 2px;
    background: #fff;
    color: #000;
    line-height: 18px;
}

sub {
    margin-left: 2px;
    color: #f00;
    font-size: 8px;
    line-height: 0;
}

.links {
    display: flex;
    gap: 13px;
    margin-left: auto;
    padding-right: 9px;
}

.links a {
    display: flex;
    align-items: center;
    gap: 2px;
}

/* status bar */
.status {
    display: flex;
    align-items: center;
    height: 22px;
    border-top: 1px solid #fff;
}

.help {
    flex: 1;
    padding-left: 2px;
}

.profile-name {
    width: 155px;
    padding-left: 5px;
}

.profile-name,
.slot,
.traffic {
    height: 18px;
    border-left: 1px solid #a0a0a0;
    box-sizing: border-box;
    line-height: 18px;
}

.slot {
    width: 69px;
}

.traffic {
    display: flex;
    gap: 2px;
    width: 119px;
    padding-left: 5px;
}

/* taskbar */
.taskbar {
    display: flex;
    align-items: center;
    height: 39px;
    border-top: 1px solid #0c2448;
    box-sizing: border-box;
    background: linear-gradient(#4d6a92 0, #355079 3%, #304d78 52%, #02204f 53%, #042456);
    color: #fff;
}

.task {
    display: flex;
    align-items: center;
    justify-content: center;
    width: 58px;
    height: 37px;
    margin: 0 2px;
    box-sizing: border-box;
}

.task:first-child {
    width: 52px;
    margin: 0;
    padding-left: 2px;
}

.task:nth-child(2) {
    margin-left: 7px;
}

.task:nth-child(4) {
    margin-right: 3px;
}

.open {
    border: 1px solid #8093b2;
    border-radius: 3px;
    background: linear-gradient(#6079a0, #3d5a86 52%, #14305f 53%, #213f70);
}

.open.current {
    border-color: #c6cfdd;
    background: linear-gradient(110deg, #c6ccd7, #7f8da6 50%, #52668a 51%, #7d8ba6);
}

.tray {
    display: flex;
    align-items: center;
    gap: 8px;
    margin-left: auto;
    font-size: 12px;
}

.tray span {
    margin-right: 6px;
    padding-bottom: 5px;
}

.tray time {
    width: 56px;
    margin: 0 10px;
    line-height: 17px;
    text-align: center;
    white-space: nowrap;
}

.show-desktop {
    width: 14px;
    height: 38px;
    border: 1px solid #5a7297;
    border-right: 0;
    box-sizing: border-box;
    background: linear-gradient(#3a5680, #17325c);
}
</style>
